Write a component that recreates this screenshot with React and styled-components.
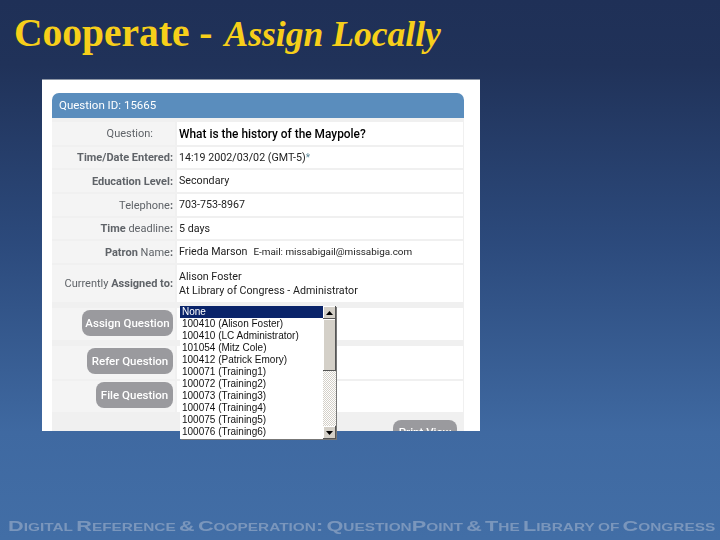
import React from "react";
import styled, { createGlobalStyle } from "styled-components";

const Global = createGlobalStyle`
  html, body { margin: 0; padding: 0; }
  body { width: 720px; height: 540px; overflow: hidden; }
`;

const Slide = styled.div`
  position: relative;
  width: 720px;
  height: 540px;
  overflow: hidden;
  display: flex;
  flex-direction: column;
  background: linear-gradient(180deg, #1f3057 0%, #203259 12%, #2c4a7c 45%, #3f69a1 80%, #426ea6 100%);
`;

const Title = styled.h1`
  margin: 0;
  padding: 11px 0 0 14px;
  height: 68px;
  box-sizing: border-box;
  font: bold 39.5px/44px "Liberation Serif", serif;
  color: #f7cf1a;
  white-space: nowrap;
`;

const TitleEm = styled.em`
  font-weight: bold;
  font-size: 35.6px;
  font-style: italic;
  margin-left: 2px;
`;

const ShotWrap = styled.div`
  position: relative;
  margin: 11px 0 0 42px;
  width: 438px;
  height: 352px;
`;

const Shot = styled.div`
  width: 438px;
  height: 352px;
  box-sizing: border-box;
  overflow: hidden;
  background: #fff;
  border-top: 1px solid #8d96a5;
  padding: 13px 16px 0 10px;
  font-family: Roboto, "Liberation Sans", Arial, sans-serif;
  filter: blur(0.35px);
`;

const PanelHeader = styled.div`
  height: 25px;
  box-sizing: border-box;
  padding: 0 0 0 7px;
  background: #5a8dbd;
  border-radius: 7px 7px 0 0;
  color: #fff;
  font-size: 11.5px;
  line-height: 25px;
`;

const Table = styled.div`
  background: #f0f0f0;
  padding-top: 4px;
  display: grid;
  grid-template-columns: 123px 1fr;
  column-gap: 2px;
  row-gap: 2px;
`;

const Label = styled.div`
  height: ${p => p.$h}px;
  padding-right: ${p => p.$pr || 2}px;
  display: flex;
  align-items: center;
  justify-content: flex-end;
  background: #f4f4f4;
  color: #5f6368;
  font-size: 11px;
  font-weight: bold;
  white-space: nowrap;
`;

const LabelLight = styled.span`
  font-weight: normal;
`;

const Value = styled.div`
  height: ${p => p.$h}px;
  margin-top: ${p => p.$mt || 0}px;
  margin-right: 1px;
  padding-left: 2px;
  box-sizing: border-box;
  background: #fff;
  color: ${p => (p.$strong ? "#000" : "#222")};
  font-size: ${p => (p.$strong ? "11.9" : "10.7")}px;
  font-weight: ${p => (p.$strong ? "500" : "normal")};
  line-height: 14px;
  display: flex;
  flex-direction: column;
  justify-content: center;
  white-space: nowrap;
`;

const Star = styled.span`
  color: #5e8a9a;
  font-size: 10px;
`;

const Email = styled.span`
  margin-left: 6px;
  font-size: 9.9px;
`;

const GreyButton = styled.div`
  width: ${p => p.$w}px;
  height: 26px;
  border-radius: 8px;
  background: #9a9a9e;
  color: #fff;
  font-size: 11.5px;
  font-weight: 500;
  display: flex;
  align-items: center;
  justify-content: center;
  white-space: nowrap;
`;

const ButtonCell = styled.div`
  height: ${p => p.$h}px;
  margin-top: ${p => p.$mt || 0}px;
  padding: 0 2px ${p => p.$pb || 0}px 0;
  box-sizing: border-box;
  background: #f4f4f4;
  display: flex;
  align-items: center;
  justify-content: flex-end;
`;

const Footer = styled.div`
  grid-column: 1 / 3;
  height: 21px;
  margin-top: -2px;
  display: flex;
  justify-content: flex-end;
  padding: 8px 7px 0 0;
`;

const PrintButton = styled(GreyButton)`
  width: 64px;
  height: 24px;
  padding-top: 5px;
  box-sizing: border-box;
  align-items: flex-start;
`;

const ListBox = styled.div`
  position: absolute;
  left: 138px;
  top: 227px;
  width: 156px;
  height: 133px;
  box-sizing: border-box;
  display: flex;
  background: #fff;
  box-shadow: 1px 1px 0 #777;
  font-family: "Liberation Sans", Arial, sans-serif;
  filter: blur(0.3px);
`;

const Options = styled.div`
  flex: 1;
  min-width: 0;
  overflow: hidden;
`;

const Option = styled.div`
  height: 12px;
  line-height: 12px;
  padding-left: 2px;
  font-size: 10px;
  white-space: nowrap;
  color: ${p => (p.$on ? "#fff" : "#111")};
  background: ${p => (p.$on ? "#0a246a" : "transparent")};
`;

const Scrollbar = styled.div`
  width: 13px;
  display: flex;
  flex-direction: column;
  background: repeating-conic-gradient(#d4d0c8 0 25%, #fff 0 50%) 0 0 / 2px 2px;
`;

const ScrollBtn = styled.div`
  height: 13px;
  flex: none;
  background: #d4d0c8;
  box-shadow: inset -1px -1px 0 #555, inset 1px 1px 0 #fff;
  display: flex;
  align-items: center;
  justify-content: center;
`;

const Thumb = styled.div`
  height: 52px;
  flex: none;
  background: #d4d0c8;
  box-shadow: inset -1px -1px 0 #555, inset 1px 1px 0 #fff;
`;

const Spacer = styled.div`
  flex: 1;
`;

const Arrow = ({ up }) => (
  <svg width="7" height="4" viewBox="0 0 7 4">
    <path d={up ? "M3.5 0L7 4H0Z" : "M0 0H7L3.5 4Z"} fill="#000" />
  </svg>
);

const FooterLine = styled.div`
  position: absolute;
  left: 8px;
  bottom: 5px;
  font: bold 15.5px/18px "Liberation Sans", sans-serif;
  font-variant: small-caps;
  word-spacing: -2px;
  color: #7a96bc;
  white-space: nowrap;
  transform-origin: left center;
  transform: scaleX(1.4);
  filter: blur(0.3px);
`;

const options = [
  "None",
  "100410 (Alison Foster)",
  "100410 (LC Administrator)",
  "101054 (Mitz Cole)",
  "100412 (Patrick Emory)",
  "100071 (Training1)",
  "100072 (Training2)",
  "100073 (Training3)",
  "100074 (Training4)",
  "100075 (Training5)",
  "100076 (Training6)",
];

export default function App() {
  return (
    <Slide>
      <Global />
      <Title>
        Cooperate - <TitleEm>Assign Locally</TitleEm>
      </Title>
      <ShotWrap>
        <Shot>
          <PanelHeader>Question ID: 15665</PanelHeader>
          <Table>
            <Label $h={23} $pr={22}><LabelLight>Question:</LabelLight></Label>
            <Value $h={23} $strong>What is the history of the Maypole?</Value>
            <Label $h={21}>Time/Date Entered:</Label>
            <Value $h={21}><span>14:19 2002/03/02 (GMT-5)<Star>*</Star></span></Value>
            <Label $h={22}>Education Level:</Label>
            <Value $h={22}>Secondary</Value>
            <Label $h={22}><span><LabelLight>Telephone</LabelLight>:</span></Label>
            <Value $h={22}>703-753-8967</Value>
            <Label $h={21}><span>Time <LabelLight>deadline</LabelLight>:</span></Label>
            <Value $h={21}>5 days</Value>
            <Label $h={22}><span>Patron <LabelLight>Name</LabelLight>:</span></Label>
            <Value $h={22}><span>Frieda Marson<Email>E-mail: missabigail@missabiga.com</Email></span></Value>
            <Label $h={37}><span><LabelLight>Currently</LabelLight> Assigned to:</span></Label>
            <Value $h={37}><div>Alison Foster</div><div>At Library of Congress - Administrator</div></Value>
            <ButtonCell $h={32} $mt={4} $pb={2}><GreyButton $w={91}>Assign Question</GreyButton></ButtonCell>
            <Value $h={32} $mt={4} />
            <ButtonCell $h={33} $mt={4} $pb={3}><GreyButton $w={86}>Refer Question</GreyButton></ButtonCell>
            <Value $h={33} $mt={4} />
            <ButtonCell $h={31} $pb={3}><GreyButton $w={77}>File Question</GreyButton></ButtonCell>
            <Value $h={31} />
            <Footer><PrintButton>Print View</PrintButton></Footer>
          </Table>
        </Shot>
        <ListBox>
          <Options>
            {options.map((o, i) => (
              <Option key={o} $on={i === 0}>{o}</Option>
            ))}
          </Options>
          <Scrollbar>
            <ScrollBtn><Arrow up /></ScrollBtn>
            <Thumb />
            <Spacer />
            <ScrollBtn><Arrow /></ScrollBtn>
          </Scrollbar>
        </ListBox>
      </ShotWrap>
      <FooterLine>Digital Reference &amp; Cooperation: QuestionPoint &amp; The Library of Congress</FooterLine>
    </Slide>
  );
}
